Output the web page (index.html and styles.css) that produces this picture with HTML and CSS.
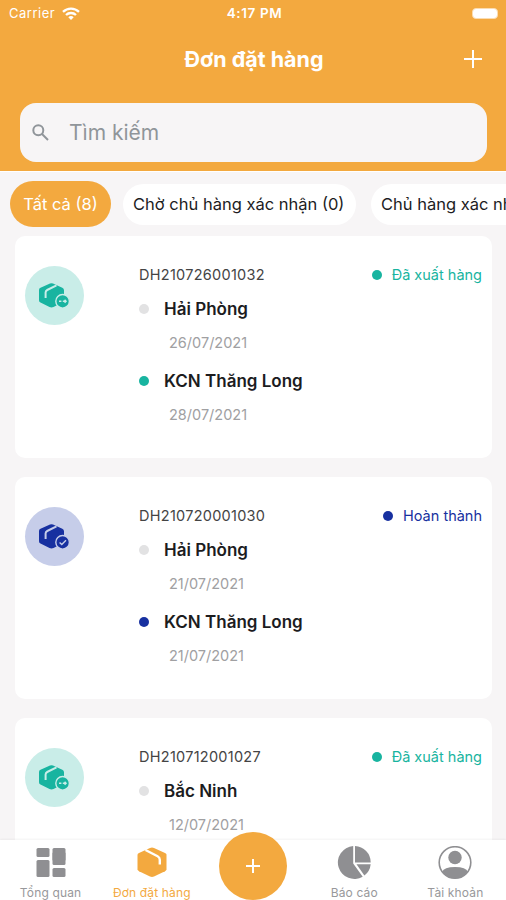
FILE: index.html
```
<!DOCTYPE html>
<html lang="vi">
<head>
    <meta charset="UTF-8">
    <meta name="viewport" content="width=device-width, initial-scale=1.0">
    <title>Đơn đặt hàng</title>
    <link rel="stylesheet" href="styles.css">
</head>
<body>

<!-- Shared icons -->
<svg class="sprite" width="0" height="0">
    <symbol id="box" viewBox="0 0 30 25">
        <path d="M0 7Q0 5.4 1.5 4.8L11 .5Q12.5-.1 14 .5L23.3 4.8Q25 5.6 25 7.3V17.5Q25 19 23.5 19.6L14.5 24Q12.5 24.8 10.5 24L1.5 19.6Q0 19 0 17.3Z"/>
        <path class="tape" d="M6.6 15V9.6Q6.6 7.8 8.2 7L17.5 2.4"/>
        <circle class="ring" cx="23.6" cy="18.3" r="6.8"/>
    </symbol>
</svg>

<header>
    <div class="status-bar">
        <div class="carrier">
            <span>Carrier</span>
            <svg width="18" height="13" viewBox="0 0 18 13" fill="none" stroke="#fff" stroke-width="2.3">
                <path d="M1 4.8a11.5 11.5 0 0 1 16 0M4 8a7.2 7.2 0 0 1 10 0"/>
                <path d="M9 13 6.3 10.3a3.8 3.8 0 0 1 5.4 0Z" fill="#fff" stroke="none"/>
            </svg>
        </div>
        <div class="clock">4:17 PM</div>
        <div class="battery"></div>
    </div>
    <div class="title-bar">
        <h1>Đơn đặt hàng</h1>
        <svg class="add" width="18" height="18" viewBox="0 0 18 18" stroke="#fff" stroke-width="2"><path d="M9 0v18M0 9h18"/></svg>
    </div>
    <div class="search">
        <svg width="17" height="17" viewBox="0 0 17 17" fill="none" stroke="#90959a" stroke-width="2">
            <circle cx="6.3" cy="6.3" r="5"/><path d="m10 10 6 6"/>
        </svg>
        <span>Tìm kiếm</span>
    </div>
</header>

<div class="chips">
    <div class="chip active"><span>Tất cả (8)</span></div>
    <div class="chip"><span>Chờ chủ hàng xác nhận (0)</span></div>
    <div class="chip"><span>Chủ hàng xác nhận (0)</span></div>
</div>

<main>
    <div class="card shipped">
        <div class="avatar">
            <svg width="31" height="26" viewBox="0 0 31 26"><use href="#box" width="30" height="25"/><path class="mark" d="M20 18.3h2.4M23.8 18.3h3.6M25.6 16.8l1.5 1.5-1.5 1.5"/></svg>
        </div>
        <div class="info">
            <div class="top"><span class="code">DH210726001032</span><span class="state"><i class="dot"></i><span>Đã xuất hàng</span></span></div>
            <div class="place"><i class="dot off"></i><b>Hải Phòng</b></div>
            <div class="date">26/07/2021</div>
            <div class="place"><i class="dot"></i><b>KCN Thăng Long</b></div>
            <div class="date">28/07/2021</div>
        </div>
    </div>

    <div class="card done">
        <div class="avatar">
            <svg width="31" height="26" viewBox="0 0 31 26"><use href="#box" width="30" height="25"/><path class="mark" d="m20.6 18.4 2.2 2.2 4.2-4.4"/></svg>
        </div>
        <div class="info">
            <div class="top"><span class="code">DH210720001030</span><span class="state"><i class="dot"></i><span>Hoàn thành</span></span></div>
            <div class="place"><i class="dot off"></i><b>Hải Phòng</b></div>
            <div class="date">21/07/2021</div>
            <div class="place"><i class="dot"></i><b>KCN Thăng Long</b></div>
            <div class="date">21/07/2021</div>
        </div>
    </div>

    <div class="card shipped">
        <div class="avatar">
            <svg width="31" height="26" viewBox="0 0 31 26"><use href="#box" width="30" height="25"/><path class="mark" d="M20 18.3h2.4M23.8 18.3h3.6M25.6 16.8l1.5 1.5-1.5 1.5"/></svg>
        </div>
        <div class="info">
            <div class="top"><span class="code">DH210712001027</span><span class="state"><i class="dot"></i><span>Đã xuất hàng</span></span></div>
            <div class="place"><i class="dot off"></i><b>Bắc Ninh</b></div>
            <div class="date">12/07/2021</div>
        </div>
    </div>
</main>

<nav>
    <div class="tab">
        <svg width="34" height="34" viewBox="0 0 34 34">
            <rect x="2.5" y="2" width="13" height="9" rx="1.5"/><rect x="2.5" y="14" width="13" height="17" rx="1.5"/>
            <rect x="18.5" y="2" width="13" height="13" rx="1.5"/><rect x="18.5" y="6" width="13" height="13" rx="1.5"/>
            <rect x="18.5" y="22" width="13" height="9" rx="1.5"/>
        </svg>
        <span>Tổng quan</span>
    </div>
    <div class="tab active">
        <svg width="34" height="34" viewBox="0 0 34 34">
            <path d="M2.5 8.8Q2.5 7.6 4 6.9L15 2Q17 1.2 19 2L30 6.9Q31.5 7.6 31.5 8.8V23.2Q31.5 24.4 30 25.2L19 30.6Q17 31.5 15 30.6L4 25.2Q2.5 24.4 2.5 23.2Z"/>
            <path d="M10.5 4 22.6 10.3Q24.8 11.5 24.8 13.8V18.6" fill="none" stroke="#fff" stroke-width="2.4"/>
        </svg>
        <span>Đơn đặt hàng</span>
    </div>
    <div class="tab">
        <div class="fab">
            <svg width="16" height="16" viewBox="0 0 16 16" stroke="#fff" stroke-width="2"><path d="M8 1v14M1 8h14"/></svg>
        </div>
    </div>
    <div class="tab">
        <svg width="34" height="34" viewBox="0 0 34 34">
            <path d="M16.2 0A16.5 16.5 0 1 0 25.7 30.7L16.2 17.5Z"/>
            <path d="M18 0A16.5 16.5 0 0 1 33.7 16.5H18Z"/>
            <path d="M19.5 18.3H33.7A16.5 16.5 0 0 1 27.4 29.6Z"/>
        </svg>
        <span>Báo cáo</span>
    </div>
    <div class="tab">
        <svg width="34" height="34" viewBox="0 0 34 34">
            <circle cx="17" cy="16.5" r="15.8" fill="none" stroke="#8f8f92" stroke-width="1.6"/>
            <circle cx="17" cy="11.5" r="6.7"/>
            <path d="M4 26Q6 21 17 21T30 26A16.3 16.3 0 0 1 4 26Z"/>
        </svg>
        <span>Tài khoản</span>
    </div>
</nav>

</body>
</html>
```
FILE: styles.css
```
:root {
    --bg: #f7f5f6;
    --primary: #f3a93f;
    --gray: #8f8f92;
    --green: #18b4a0;
    --blue: #1730a0;
}

* { box-sizing: border-box; }

body {
    font-family: Inter, 'Liberation Sans', sans-serif;
    background: var(--bg);
    margin: 0;
    height: 900px;
    overflow: hidden;
    color: #1c1c1e;
    display: flex;
    flex-direction: column;
}

.sprite { position: absolute; }

header {
    background: var(--primary);
    color: #fff;
    height: 171px;
    flex: none;
    padding: 0 19px 0 20px;
}

/* Phone status bar */
.status-bar {
    display: grid;
    grid-template-columns: 1fr auto 1fr;
    align-items: center;
    height: 26px;
    margin: 0 -13px 0 -11px;
    font-size: 13px;
}

.carrier { display: flex; align-items: center; gap: 7px; letter-spacing: 0.5px; }
.clock { font-weight: 600; font-size: 13.5px; letter-spacing: 0.6px; }
.battery {
    justify-self: end;
    width: 26px;
    height: 11px;
    margin-right: 2px;
    background: #fff;
    border: 1px solid #fbdcb0;
    border-radius: 4px;
}

.title-bar {
    display: grid;
    grid-template-columns: 18px 1fr 18px;
    align-items: center;
    height: 65px;
    margin-right: -14px;
    padding-right: 19px;
}

.title-bar::before { content: ""; }
h1 { margin: 0 0 0 6px; font-size: 21.5px; font-weight: 700; text-align: center; }

.search {
    display: flex;
    align-items: center;
    gap: 20px;
    height: 59px;
    margin-top: 12px;
    padding-left: 12px;
    background: var(--bg);
    border-radius: 16px;
    color: #90959a;
    font-size: 21px;
}

/* Filters */
.chips {
    display: flex;
    align-items: center;
    flex: none;
    height: 65px;
    padding-left: 10px;
    overflow: hidden;
    border-top: 1px solid #fff;
}

.chip {
    flex: none;
    height: 41px;
    display: flex;
    align-items: center;
    min-width: 233px;
    padding: 0 10px;
    margin-right: 15px;
    background: #fff;
    border-radius: 21px;
    font-size: 16.5px;
    white-space: nowrap;
}

.chip.active {
    justify-content: center;
    min-width: 101px;
    height: 46px;
    margin-right: 12px;
    border-radius: 23px;
    background: var(--primary);
    color: #fff;
}

/* Orders */
main {
    flex: 1;
    min-height: 0;
    overflow: hidden;
    padding: 0 14px 0 15px;
    display: flex;
    flex-direction: column;
    gap: 19px;
}

.card {
    flex: none;
    display: flex;
    height: 222px;
    padding: 23px 10px 0 10px;
    background: #fff;
    border-radius: 10px;
}

.shipped { --tone: var(--green); --soft: #c9ede8; }
.done { --tone: var(--blue); --soft: #c6cde9; }

.avatar {
    width: 59px;
    height: 59px;
    margin: 7px 55px 0 0;
    border-radius: 50%;
    background: var(--soft);
    fill: var(--tone);
    display: flex;
    align-items: center;
    justify-content: center;
}

.avatar svg, .avatar use { overflow: visible; }
#box { overflow: visible; }
.tape { fill: none; stroke: var(--soft); stroke-width: 2; }
.ring { stroke: var(--soft); stroke-width: 1.4; }
.mark { fill: none; stroke: var(--soft); stroke-width: 1.4; }

.info { flex: 1; }

.top { display: flex; justify-content: space-between; align-items: center; height: 31px; }
.code { font-size: 14.5px; letter-spacing: 0.27px; color: #444; }
.state { display: flex; align-items: center; gap: 10px; font-size: 14.5px; color: var(--tone); }

.dot { width: 10px; height: 10px; border-radius: 50%; background: var(--tone); }
.dot.off { background: #e2e2e3; }

.place { display: flex; align-items: center; gap: 15px; height: 38px; }
.place b { font-size: 17px; font-weight: 600; }
.date { height: 34px; line-height: 29px; padding-left: 30px; font-size: 14.5px; color: #a0a0a2; }

/* Bottom tabs */
nav {
    flex: none;
    display: grid;
    grid-template-columns: repeat(5, 1fr);
    height: 60px;
    background: #fff;
    z-index: 1;
    box-shadow: 0 -1px 2px rgba(0, 0, 0, 0.05);
}

.tab {
    display: flex;
    flex-direction: column;
    align-items: center;
    padding-top: 6px;
    font-size: 12px;
    letter-spacing: 0.15px;
    color: #98989b;
    fill: var(--gray);
    white-space: nowrap;
}

.tab.active { color: var(--primary); fill: var(--primary); }
.tab span { line-height: 16px; margin-top: 5px; }

.fab {
    width: 68px;
    height: 68px;
    margin-top: -14px;
    border-radius: 50%;
    background: var(--primary);
    display: flex;
    align-items: center;
    justify-content: center;
}
```
